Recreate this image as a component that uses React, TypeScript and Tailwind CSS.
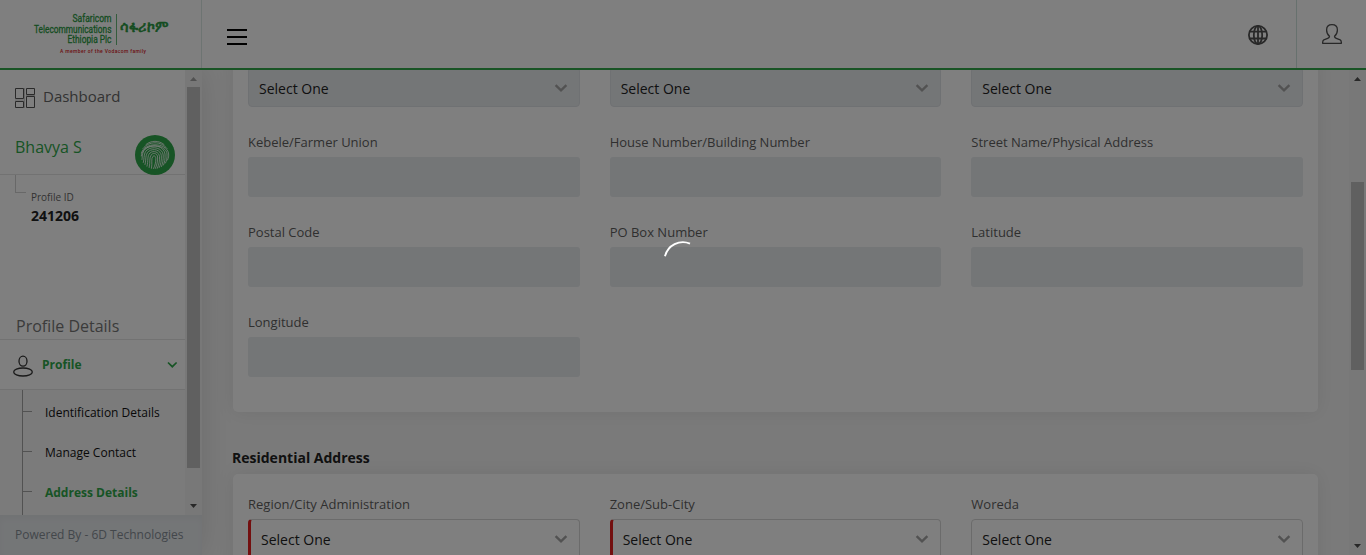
import React from 'react';

function Chevron({ className = '' }: { className?: string }) {
  return (
    <svg className={className} width="14" height="14" viewBox="0 0 14 14" fill="none" stroke="currentColor" strokeWidth="2.4">
      <path d="M1.6 4.2 L7 9.4 L12.4 4.2" />
    </svg>
  );
}

function Label({ text }: { text: string }) {
  return <div className="h-[30px] text-[13px] leading-[20px] pt-[5px] text-[#5f5f5f] whitespace-nowrap">{text}</div>;
}

function Input({ label }: { label: string }) {
  return (
    <div className="flex flex-col h-[90px]">
      <Label text={label} />
      <div className="h-10 rounded-[3px] bg-[#e9ecef]" />
    </div>
  );
}

function Select({ label, disabled = false, required = false }: { label?: string; disabled?: boolean; required?: boolean }) {
  return (
    <div className={'flex flex-col ' + (label ? 'h-[90px]' : 'h-[60px]')}>
      {label && <Label text={label} />}
      <div
        className={
          'flex h-10 items-center justify-between rounded-[4px] border pr-[11px] pl-[10px] text-[14px] text-[#222] ' +
          (disabled ? 'bg-[#e9ecef] border-[#dfe2e6] pt-[2px] ' : 'bg-white border-[#d6d6d6] ') +
          (required ? 'border-l-[3px] border-l-[#e61e1e]' : '')
        }
      >
        <span>Select One</span>
        <Chevron className="text-[#a5a5a5]" />
      </div>
    </div>
  );
}

function Arrow({ up = false, color }: { up?: boolean; color: string }) {
  return (
    <svg width="7" height="4" viewBox="0 0 7 4" className={color} fill="currentColor">
      <path d={up ? 'M0 4 L3.5 0 L7 4Z' : 'M0 0 L3.5 4 L7 0Z'} />
    </svg>
  );
}

function Logo() {
  return (
    <svg width="140" height="46" viewBox="30 10 140 46" className="font-['Roboto']">
      <g fill="#2a9a42" stroke="#2a9a42" strokeWidth="0.3" fontSize="10.8" textAnchor="end">
        <text x="111.500" y="22.300" textLength="39" lengthAdjust="spacingAndGlyphs">Safaricom</text>
        <text x="111.500" y="32.800" textLength="77.500" lengthAdjust="spacingAndGlyphs">Telecommunications</text>
        <text x="111.500" y="43.300" textLength="44" lengthAdjust="spacingAndGlyphs">Ethiopia Plc</text>
      </g>
      <rect x="116" y="14" width="1" height="31" fill="#2a9a42" opacity="0.700" />
      <text x="120" y="31.500" fontSize="15" fill="#2a9a42" stroke="#2a9a42" strokeWidth="0.700" textLength="48" lengthAdjust="spacingAndGlyphs">ሳፋሪኮም</text>
      <text x="60" y="53" fontSize="5" fontWeight="500" fill="#d8232a" textLength="86">A member of the Vodacom family</text>
    </svg>
  );
}

function Fingerprint() {
  return (
    <svg width="40" height="40" viewBox="0 0 40 40" fill="none">
      <circle cx="20" cy="20" r="20" fill="#2fa84a" />
      <g stroke="#fff" strokeWidth="0.8" strokeLinecap="round">
        <path d="M11 9.500 C16 5.200 24 5.200 29 9.500" />
        <path d="M8 13.500 C14 5.800 26 5.800 32 13.500" />
        <path d="M6.500 18 C9 7 31 7 33.500 18 C34 21 33.500 23 32.500 25" />
        <path d="M6.300 21 C7 7.800 31 8 32 19 C32.300 23 31.500 26 30.500 28" />
        <path d="M7 24.500 C7.500 21 7 16 11.500 13 C18 8.700 29 11 30 19 C30.400 24 29.500 27.500 28.500 30" />
        <path d="M8.300 27.500 C9.500 23 8.500 18 12 15 C18 10.500 27.500 13 28.200 20 C28.500 25 27.500 29 26.500 31.500" />
        <path d="M10 29.500 C11.500 24 9.800 20 13.500 16.500 C18.500 12.500 25.800 15.300 26.300 20.500 C26.700 25 25.700 30 24.300 32.500" />
        <path d="M12 31.200 C13.500 26 11.800 21 15 18 C18.500 15 24 17 24.500 21.500 C24.800 26 23.800 30 22.300 33.300" />
        <path d="M14.200 32.500 C15.500 27 13.800 22.500 16.500 19.500 C19 17.300 22.300 18.800 22.600 22 C22.800 26 22 30 20.300 33.500" />
        <path d="M16.500 33.300 C17.500 28 15.800 23.500 18 21.300 C19.500 20 20.700 21.500 20.800 23.500 C20.900 27 20 31 18.500 33.500" />
      </g>
    </svg>
  );
}

function Header() {
  return (
    <header className="relative z-10 flex h-[70px] shrink-0 border-b-2 border-[#32a84b] bg-white">
      <div className="flex w-[202px] items-start border-r border-[#dbe9e5] pl-[30px] pt-[10px]">
        <Logo />
      </div>
      <div className="flex flex-1 items-start pl-[25px] pt-[29px]">
        <div className="flex w-5 flex-col gap-[5px]">
          <div className="h-[2px] bg-black" />
          <div className="h-[2px] bg-black" />
          <div className="h-[2px] bg-black" />
        </div>
      </div>
      <div className="flex w-[48px] items-start pt-[25px]">
        <svg width="20" height="20" viewBox="0 0 20 20" fill="none" stroke="#505050" strokeWidth="1.800">
          <circle cx="10" cy="10" r="9.100" />
          <ellipse cx="10" cy="10" rx="4.200" ry="9.100" />
          <path d="M10 1 V19 M1.600 6.700 H18.400 M1.600 13.500 H18.400" />
        </svg>
      </div>
      <div className="flex w-[70px] items-start border-l border-[#cfe3dc] pl-[25px] pt-[24px]">
        <svg width="20" height="20" viewBox="0 0 20 20" fill="none" stroke="#505050" strokeWidth="1.300" strokeLinejoin="round">
          <path d="M7.500 12.300 C5.400 10.500 4.600 8.300 4.600 5.900 C4.600 2.600 6.700 .7 10 .7 S15.400 2.600 15.400 5.900 C15.400 8.300 14.600 10.500 12.500 12.300 C12.500 13.500 13.200 14 14.300 14.400 L18.200 15.800 C19.200 16.200 19.400 17 19.400 19.300 H.6 C.6 17 .8 16.200 1.800 15.800 L5.700 14.400 C6.800 14 7.500 13.500 7.500 12.300Z" />
        </svg>
      </div>
    </header>
  );
}

function SubItem({ text, active = false }: { text: string; active?: boolean }) {
  return (
    <div className="flex h-10 items-center">
      <div className="mb-[3px] h-px w-[9px] bg-[#a5a5a5]" />
      <span className={'ml-[13px] text-[12px] whitespace-nowrap ' + (active ? 'font-bold text-[#2fa84a]' : 'text-[#111]')}>{text}</span>
    </div>
  );
}

function Sidebar() {
  return (
    <aside className="relative flex w-[202px] shrink-0 flex-col bg-white shadow-[0_0_30px_rgba(0,0,0,0.12)]">
      <div className="flex h-[445px] shrink-0 overflow-hidden">
        <div className="flex w-[185px] flex-col">
          <div className="flex h-[54px] items-start pl-[15px] text-[15px] text-[#666]">
            <svg width="20" height="20" viewBox="0 0 20 20" fill="none" stroke="#555" className="mt-[18px]">
              <path d="M9.500 0 V20 M0 12 H10 M11 7.500 H20" stroke="#ccc" />
              <path d="M.5 .5 H8.500 V10.500 H.5Z M11.500 .5 H19.500 V6.500 H11.500Z M.5 13.500 H8.500 V19.500 H.5Z M11.500 8.500 H19.500 V19.500 H11.500Z" />
            </svg>
            <span className="ml-2 mt-[15px]">Dashboard</span>
          </div>
          <div className="flex h-[51px] justify-between border-b border-[#e4e4e4] pl-[15px] pr-[10px]">
            <span className="pt-[11px] text-[16px] leading-6 text-[#2fa84a]">Bhavya S</span>
            <div className="mt-[11px] h-10">
              <Fingerprint />
            </div>
          </div>
          <div className="flex h-[140px] pl-[15px]">
            <div className="h-[18px] w-[11px] border-b border-l border-[#d0d0d0]" />
            <div className="flex flex-col pl-[5px] pt-[14px]">
              <span className="text-[10px] leading-[16px] text-[#666]">Profile ID</span>
              <span className="text-[14px] font-bold leading-[21px] text-[#222]">241206</span>
            </div>
          </div>
          <div className="h-[25px] border-b border-[#e4e4e4] pl-4 text-[16px] leading-[22px] text-[#777]">Profile Details</div>
          <div className="flex h-[50px] items-center border-b border-[#e4e4e4] pl-[13px] pr-[6px]">
            <svg width="20" height="22" viewBox="0 0 20 22" fill="none" stroke="#333" strokeWidth="1.300" className="mt-[2px]">
              <ellipse cx="10" cy="6.200" rx="4" ry="5" />
              <ellipse cx="10" cy="17" rx="9.300" ry="4" />
            </svg>
            <span className="ml-[9px] flex-1 text-[12px] font-bold text-[#2fa84a]">Profile</span>
            <svg width="14" height="14" viewBox="0 0 14 14" fill="none" stroke="#2fa84a" strokeWidth="1.700">
              <path d="M3 4.500 L7.300 8.700 L11.600 4.500" />
            </svg>
          </div>
          <div className="flex h-[125px] bg-[#f7f7f7] pl-[22px]">
            <div className="w-px bg-[#a5a5a5]" />
            <div className="flex flex-col pt-[3px]">
              <SubItem text="Identification Details" />
              <SubItem text="Manage Contact" />
              <SubItem text="Address Details" active />
            </div>
          </div>
        </div>
        <div className="flex w-[17px] flex-col items-center bg-[#f1f1f1]">
          <div className="flex h-[17px] items-center"><Arrow up color="text-[#a3a3a3]" /></div>
          <div className="h-[381px] w-[13px] bg-[#c1c1c1]" />
          <div className="flex flex-1 items-end pb-[7px]"><Arrow color="text-[#505050]" /></div>
        </div>
      </div>
      <div className="flex h-10 items-center bg-[#e9ecef] pl-[15px] text-[12px] text-[#868e96] whitespace-nowrap shadow-[inset_0_4px_6px_rgba(0,0,0,0.03)]">Powered By - 6D Technologies</div>
    </aside>
  );
}

const card = 'shrink-0 grid grid-cols-3 gap-x-[30px] rounded-[5px] bg-white px-[15px] shadow-[0_0_20px_rgba(0,0,0,0.08)] content-start';

export default function App() {
  return (
    <div className="relative flex h-[555px] w-[1366px] flex-col overflow-hidden bg-[#f5f5f5] font-['Open_Sans',sans-serif]">
      <Header />
      <div className="flex h-[485px]">
        <Sidebar />
        <main className="flex flex-1 flex-col overflow-hidden pl-[31px] pr-[31px]">
          <div className={card + ' -mt-[18px] h-[360px] pt-[15px]'}>
            <Select disabled />
            <Select disabled />
            <Select disabled />
            <Input label="Kebele/Farmer Union" />
            <Input label="House Number/Building Number" />
            <Input label="Street Name/Physical Address" />
            <Input label="Postal Code" />
            <Input label="PO Box Number" />
            <Input label="Latitude" />
            <Input label="Longitude" />
          </div>
          <h2 className="-ml-px h-[62px] shrink-0 pt-[36px] text-[14px] font-bold leading-5 text-[#222]">Residential Address</h2>
          <div className={card + ' h-[200px] pt-[15px]'}>
            <Select label="Region/City Administration" required />
            <Select label="Zone/Sub-City" required />
            <Select label="Woreda" />
          </div>
        </main>
        <div className="flex w-[17px] flex-col items-center bg-[#f1f1f1]">
          <div className="flex h-[17px] items-center"><Arrow up color="text-[#505050]" /></div>
          <div className="mt-[95px] h-[188px] w-[13px] bg-[#c1c1c1]" />
          <div className="flex flex-1 items-end pb-[7px]"><Arrow color="text-[#505050]" /></div>
        </div>
      </div>
      <div className="absolute inset-0 z-20 bg-black/50">
        <svg className="absolute left-[663px] top-[240px]" width="40" height="40" viewBox="0 0 40 40" fill="none" stroke="#fff" strokeWidth="1.900">
          <path d="M2 16.200 A18.500 18.500 0 0 1 27 3.600" />
        </svg>
      </div>
    </div>
  );
}
